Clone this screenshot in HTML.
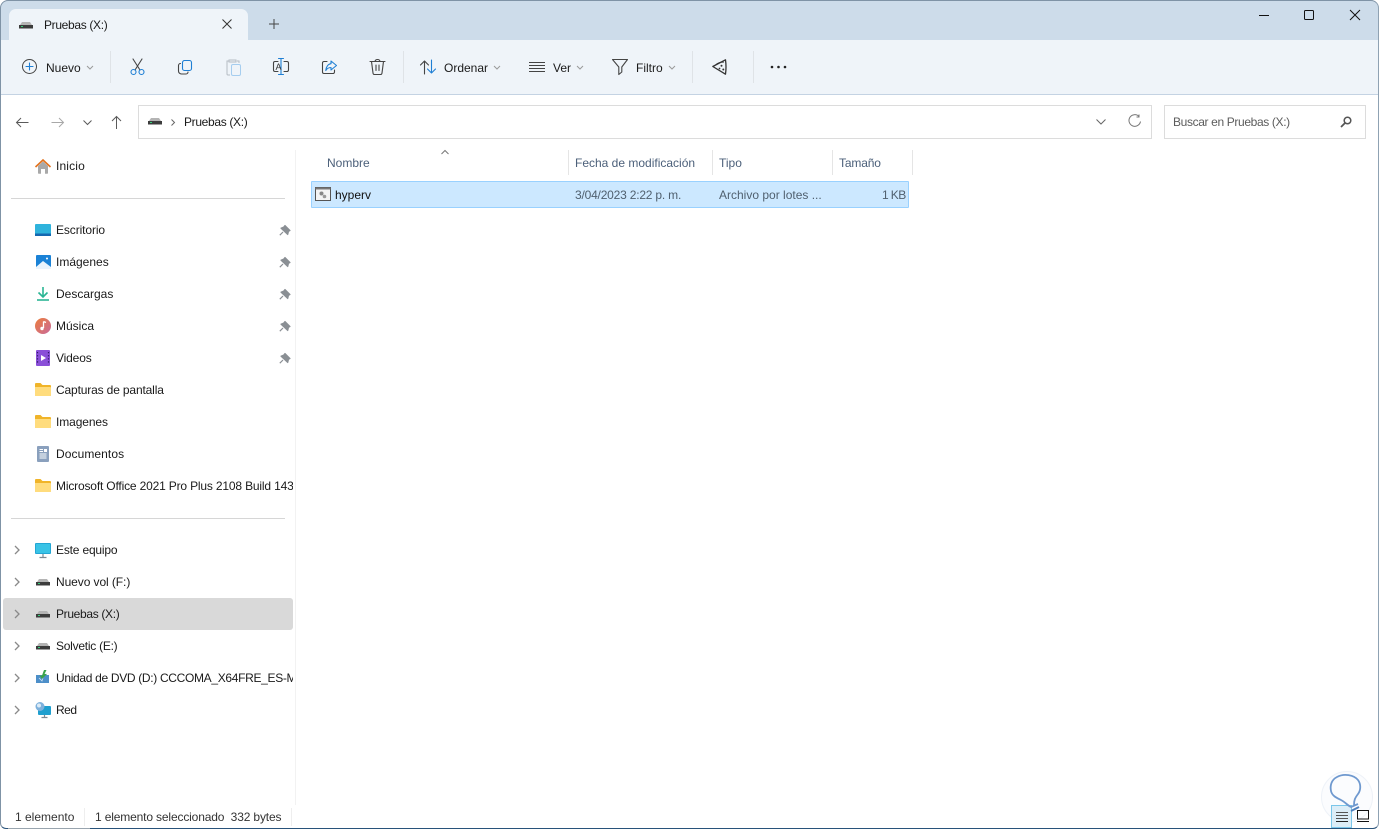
<!DOCTYPE html>
<html lang="es"><head><meta charset="utf-8"><title>Pruebas (X:)</title>
<style>
html,body{margin:0;padding:0;width:1379px;height:829px;overflow:hidden;background:#fff}
body{font-family:"Liberation Sans",sans-serif;font-size:12px;color:#1a1a1a;position:relative}
.a{position:absolute}
.t{position:absolute;white-space:nowrap;line-height:16px;height:16px}
svg{position:absolute;overflow:visible}
.n{left:56px}
.g{color:#5c5c5c}
.s{fill:none;stroke:#444;stroke-width:1.1;stroke-linecap:round;stroke-linejoin:round}
.b{fill:none;stroke:#1f7fd4;stroke-width:1.1;stroke-linecap:round;stroke-linejoin:round}
</style></head><body>
<svg width="0" height="0" style="position:absolute"><defs>
<g id="drive"><rect x="0" y="3" width="14" height="3.500" fill="#3c3c3c"/><path d="M1 3 L3 0 H11 L13 3Z" fill="#b4b4b4"/><rect x="2" y="4" width="2" height="1" fill="#36d17a"/></g>
<g id="folder"><path d="M0 2 a1 1 0 0 1 1-1 h4.500 l2 2 H15 a1 1 0 0 1 1 1 V13 a1 1 0 0 1-1 1 H1 a1 1 0 0 1-1-1Z" fill="#f0b429"/><path d="M0 5 H15 a1 1 0 0 1 1 1 V13 a1 1 0 0 1-1 1 H1 a1 1 0 0 1-1-1Z" fill="#ffdc7d"/></g>
<g id="pin"><path d="M6 .5 L11 5.500 L9.500 6.300 L8.700 9.500 L2 3.200 L4.800 2Z M4 7 L.8 10.200" fill="#8a8f94" stroke="#8a8f94" stroke-width="1.200" stroke-linejoin="round"/></g>
<path id="chev" d="M0 0 L4 4 L0 8" fill="none" stroke="#8a8a8a" stroke-width="1.300"/>
<path id="dd" d="M0 0 L3 3 L6 0" fill="none" stroke="#9a9a9a" stroke-width="1"/>
</defs></svg>

<!-- title bar -->
<div class="a" style="left:0;top:0;width:1379px;height:40px;background:#cddcea;border-radius:8px 8px 0 0"></div>
<div class="a" style="left:9px;top:9px;width:239px;height:32px;background:#eff4f9;border-radius:7px 7px 0 0"></div>
<svg style="left:19px;top:22px" width="14" height="8"><use href="#drive"/></svg>
<div class="t" style="left:44px;top:17px;letter-spacing:-.33px">Pruebas (X:)</div>
<svg style="left:222px;top:19px" width="10" height="10"><path d="M.5.5 L9.500 9.500 M9.500.5 L.5 9.500" fill="none" stroke="#333" stroke-width="1"/></svg>
<svg style="left:269px;top:19px" width="10" height="10"><path d="M5 0 V10 M0 5 H10" fill="none" stroke="#444" stroke-width="1"/></svg>
<!-- window controls -->
<svg style="left:1259px;top:15px" width="10" height="2"><path d="M0 .5 H10" stroke="#111" stroke-width="1"/></svg>
<svg style="left:1304px;top:10px" width="10" height="10"><rect x=".5" y=".5" width="9" height="9" rx="1" fill="none" stroke="#111"/></svg>
<svg style="left:1350px;top:10px" width="10" height="10"><path d="M0 0 L10 10 M10 0 L0 10" stroke="#111" stroke-width="1"/></svg>

<!-- toolbar -->
<div class="a" style="left:0;top:40px;width:1379px;height:54px;background:#eff4f9"></div>
<div class="a" style="left:0;top:94px;width:1379px;height:1px;background:#c4d3e3"></div>
<svg style="left:22px;top:59px" width="15" height="15"><circle cx="7.500" cy="7.500" r="7" fill="none" stroke="#444"/><path d="M7.500 4 V11 M4 7.500 H11" class="b"/></svg>
<div class="t" style="left:46px;top:60px">Nuevo</div>
<svg style="left:87px;top:66px" width="6" height="4"><use href="#dd"/></svg>
<div class="a" style="left:110px;top:51px;width:1px;height:32px;background:#dfe3e7"></div>
<svg style="left:130px;top:59px" width="15" height="16"><path d="M3 0 L10 11 M12 0 L5 11" class="s"/><circle cx="3.500" cy="13" r="2.500" class="b"/><circle cx="11.500" cy="13" r="2.500" class="b"/></svg>
<svg style="left:178px;top:60px" width="15" height="15"><rect x="4.500" y=".5" width="9" height="10" rx="2" class="b"/><path d="M2.500 3.500 a2 2 0 0 0-2 2 V11 a3 3 0 0 0 3 3 H8 a2 2 0 0 0 2-2" class="s"/></svg>
<svg style="left:226px;top:59px" width="15" height="17"><path d="M3 2 H1 V15 a1 1 0 0 0 1 1 H4 M11 2 H13 V4 M3 3 V1 H10 V3Z" fill="none" stroke="#b5bcc4"/><rect x="5.500" y="5.500" width="9" height="11" rx="1.500" fill="none" stroke="#a5cdef"/></svg>
<svg style="left:273px;top:58px" width="16" height="18"><path d="M5 3.500 H2 a1.500 1.500 0 0 0-1.500 1.500 V12 a1.500 1.500 0 0 0 1.500 1.500 H5 M11 3.500 H14 a1.500 1.500 0 0 1 1.500 1.500 V12 a1.500 1.500 0 0 1-1.500 1.500 H11" class="s"/><path d="M5.500 .5 H10.500 M5.500 16.500 H10.500 M8 .5 V16.500" class="b"/><text x="2.500" y="12" font-family="Liberation Sans" font-size="9" fill="#333">A</text></svg>
<svg style="left:322px;top:60px" width="15" height="15"><path d="M5 1.500 H2 a1.500 1.500 0 0 0-1.500 1.500 V12 a1.500 1.500 0 0 0 1.500 1.500 H11 a1.500 1.500 0 0 0 1.500-1.500 V10" class="s"/><path d="M9 1 L14.500 5.500 L9 10 V7.500 C6.500 7.500 5 8.500 3.800 10.500 C4 7 6 4 9 3.700Z" class="b"/></svg>
<svg style="left:370px;top:59px" width="15" height="16"><path d="M0 2.500 H15 M5 2.500 a2.500 2 0 0 1 5 0 M1.500 2.500 L3 14 a1.500 1.500 0 0 0 1.500 1.500 H10.500 a1.500 1.500 0 0 0 1.500-1.500 L13.500 2.500 M6 6 V11.500 M9 6 V11.500" class="s"/></svg>
<div class="a" style="left:403px;top:51px;width:1px;height:32px;background:#dfe3e7"></div>
<svg style="left:420px;top:60px" width="16" height="14"><path d="M4.500 14 V1 M.5 5 L4.500 1 L8.500 5" class="s"/><path d="M11.500 0 V13 M7.500 9 L11.500 13 L15.500 9" class="b"/></svg>
<div class="t" style="left:444px;top:60px">Ordenar</div>
<svg style="left:494px;top:66px" width="6" height="4"><use href="#dd"/></svg>
<svg style="left:529px;top:62px" width="16" height="10"><path d="M0 .5 H16 M0 3.500 H16 M0 6.500 H16 M0 9.500 H16" stroke="#444" stroke-width="1"/></svg>
<div class="t" style="left:553px;top:60px">Ver</div>
<svg style="left:577px;top:66px" width="6" height="4"><use href="#dd"/></svg>
<svg style="left:612px;top:59px" width="16" height="16"><path d="M.5 .5 H15.500 L9.800 8 V13 L6.800 15.500 V8Z" class="s"/></svg>
<div class="t" style="left:636px;top:60px">Filtro</div>
<svg style="left:669px;top:66px" width="6" height="4"><use href="#dd"/></svg>
<div class="a" style="left:692px;top:51px;width:1px;height:32px;background:#dfe3e7"></div>
<svg style="left:712px;top:59px" width="15" height="16"><path d="M.8 7.500 L13.500 .8 Q14.500 8 13.500 15.200Z" fill="none" stroke="#333" stroke-width="1.300" stroke-linejoin="round"/><path d="M3.500 6 C6 3.800 9 3 11.800 3.200" fill="none" stroke="#333" stroke-width="1"/><circle cx="9.500" cy="6.800" r="1" fill="#333"/><circle cx="11.300" cy="10.500" r="1" fill="#333"/><circle cx="7.500" cy="9.500" r=".9" fill="#333"/></svg>
<div class="a" style="left:753px;top:51px;width:1px;height:32px;background:#dfe3e7"></div>
<svg style="left:770px;top:65px" width="17" height="4"><circle cx="2" cy="2" r="1.300" fill="#222"/><circle cx="8.500" cy="2" r="1.300" fill="#222"/><circle cx="15" cy="2" r="1.300" fill="#222"/></svg>

<!-- nav -->
<svg style="left:16px;top:117px" width="13" height="11"><path d="M12.500 5.500 H.5 M5 1 L.5 5.500 L5 10" fill="none" stroke="#5a5a5a" stroke-width="1"/></svg>
<svg style="left:51px;top:117px" width="13" height="11"><path d="M.5 5.500 H12.500 M8 1 L12.500 5.500 L8 10" fill="none" stroke="#a8a8a8" stroke-width="1"/></svg>
<svg style="left:83px;top:120px" width="9" height="5"><path d="M.5 .5 L4.500 4.500 L8.500 .5" fill="none" stroke="#5a5a5a" stroke-width="1"/></svg>
<svg style="left:111px;top:116px" width="11" height="13"><path d="M5.500 13 V.5 M1 5 L5.500 .5 L10 5" fill="none" stroke="#5a5a5a" stroke-width="1"/></svg>
<div class="a" style="left:138px;top:105px;width:1012px;height:32px;border:1px solid #dcdcdc;box-sizing:content-box"></div>
<svg style="left:148px;top:118px" width="14" height="8"><use href="#drive"/></svg>
<svg style="left:171px;top:119px" width="4" height="7"><path d="M.5 .5 L3.500 3.500 L.5 6.500" fill="none" stroke="#666" stroke-width="1"/></svg>
<div class="t" style="left:184px;top:114px;letter-spacing:-.33px">Pruebas (X:)</div>
<svg style="left:1096px;top:119px" width="10" height="6"><path d="M.5 .5 L5 5 L9.500 .5" fill="none" stroke="#666" stroke-width="1"/></svg>
<svg style="left:1128px;top:114px" width="13" height="14"><path d="M11 2.500 A5.800 5.800 0 1 0 12.500 7.500 M11 .5 V3 H8.500" fill="none" stroke="#777" stroke-width="1"/></svg>
<div class="a" style="left:1164px;top:105px;width:200px;height:32px;border:1px solid #dcdcdc"></div>
<div class="t g" style="left:1173px;top:114px;letter-spacing:-.36px">Buscar en Pruebas (X:)</div>
<svg style="left:1340px;top:116px" width="12" height="12"><circle cx="7.500" cy="4.500" r="3.300" fill="none" stroke="#555" stroke-width="1.500"/><path d="M5 7 L1 11" stroke="#555" stroke-width="1.800"/></svg>

<!-- sidebar -->
<div class="a" style="left:295px;top:150px;width:1px;height:655px;background:#f2f2f2"></div>
<div class="a" style="left:3px;top:598px;width:290px;height:32px;background:#d9d9d9;border-radius:3px"></div>
<div class="a" style="left:11px;top:198px;width:274px;height:1px;background:#d6d6d6"></div>
<div class="a" style="left:11px;top:518px;width:274px;height:1px;background:#d6d6d6"></div>

<svg style="left:35px;top:159px" width="16" height="15"><path d="M3 7 V14 a.800 .800 0 0 0 .800 .800 H6 V10 H10 V14.800 H12.200 a.800 .800 0 0 0 .800-.800 V7 L8 2.500Z" fill="#a9a9a9"/><path d="M.5 8 L8 1 L15.500 8" fill="none" stroke="#e3721c" stroke-width="1.600"/></svg>
<div class="t n" style="top:158px;letter-spacing:.15px">Inicio</div>

<svg style="left:35px;top:224px" width="16" height="12"><rect width="16" height="12" rx="1" fill="#2fb3dc"/><rect y="9.500" width="16" height="2.500" fill="#1568b0"/></svg>
<div class="t n" style="top:222px;letter-spacing:-.1px">Escritorio</div>
<svg style="left:36px;top:255px" width="15" height="14"><rect width="15" height="14" rx="1" fill="#1b82d6"/><path d="M0 12 L7 6 L15 12 V14 H0Z" fill="#eaf4fd"/><circle cx="11" cy="3.500" r="1" fill="#fff"/></svg>
<div class="t n" style="top:254px">Imágenes</div>
<svg style="left:37px;top:287px" width="12" height="14"><path d="M6 0 V9 M1.500 5.500 L6 10 L10.500 5.500" fill="none" stroke="#2bb594" stroke-width="1.600"/><path d="M0 13 H12" stroke="#2bb594" stroke-width="1.600"/></svg>
<div class="t n" style="top:286px">Descargas</div>
<svg style="left:35px;top:318px" width="16" height="16"><defs><linearGradient id="m" x1="0" y1="0" x2="1" y2="1"><stop offset="0" stop-color="#ec7d3a"/><stop offset="1" stop-color="#c96a9c"/></linearGradient></defs><circle cx="8" cy="8" r="8" fill="url(#m)"/><path d="M8.500 3.500 V10 M8.500 3.500 L11 4.500" stroke="#fff" stroke-width="1.300" fill="none"/><circle cx="7" cy="10.500" r="1.700" fill="#fff"/></svg>
<div class="t n" style="top:318px">Música</div>
<svg style="left:36px;top:350px" width="14" height="16"><rect width="14" height="16" rx="1" fill="#8a4fd8"/><path d="M5 5 L10 8 L5 11Z" fill="#fff"/><path d="M1.500 2 V14 M12.500 2 V14" stroke="#2f1a66" stroke-width="1.200" stroke-dasharray="1.300 1.800"/></svg>
<div class="t n" style="top:350px;letter-spacing:-.15px">Videos</div>
<svg style="left:279px;top:225px" width="11" height="11"><use href="#pin"/></svg>
<svg style="left:279px;top:257px" width="11" height="11"><use href="#pin"/></svg>
<svg style="left:279px;top:289px" width="11" height="11"><use href="#pin"/></svg>
<svg style="left:279px;top:321px" width="11" height="11"><use href="#pin"/></svg>
<svg style="left:279px;top:353px" width="11" height="11"><use href="#pin"/></svg>

<svg style="left:35px;top:382px" width="16" height="15"><use href="#folder"/></svg>
<div class="t n" style="top:382px;letter-spacing:-.15px">Capturas de pantalla</div>
<svg style="left:35px;top:414px" width="16" height="15"><use href="#folder"/></svg>
<div class="t n" style="top:414px;letter-spacing:-.1px">Imagenes</div>
<svg style="left:37px;top:446px" width="12" height="16"><rect width="12" height="16" rx="1" fill="#8aa0bd"/><path d="M2.500 3.500 H6 M2.500 5.500 H6 M2.500 8 H9.500 M2.500 10 H9.500 M2.500 12 H9.500" stroke="#fff" stroke-width="1"/><rect x="7" y="3" width="3" height="3" fill="#fff"/></svg>
<div class="t n" style="top:446px;letter-spacing:.08px">Documentos</div>
<svg style="left:35px;top:478px" width="16" height="15"><use href="#folder"/></svg>
<div class="a" style="left:56px;top:478px;width:237px;height:16px;overflow:hidden;white-space:nowrap;line-height:16px;letter-spacing:-.17px">Microsoft Office 2021 Pro Plus 2108 Build 143</div>

<svg style="left:15px;top:546px" width="6" height="9"><use href="#chev"/></svg>
<svg style="left:15px;top:578px" width="6" height="9"><use href="#chev"/></svg>
<svg style="left:15px;top:610px" width="6" height="9"><use href="#chev"/></svg>
<svg style="left:15px;top:642px" width="6" height="9"><use href="#chev"/></svg>
<svg style="left:15px;top:674px" width="6" height="9"><use href="#chev"/></svg>
<svg style="left:15px;top:706px" width="6" height="9"><use href="#chev"/></svg>

<svg style="left:35px;top:543px" width="16" height="15"><rect width="16" height="11" rx="1" fill="#23a6d4"/><rect x="1" y="1" width="14" height="9" fill="#39c3e6"/><path d="M8 11 V14 M4.500 14.500 H11.500" stroke="#7c8a94" stroke-width="1.200"/></svg>
<div class="t n" style="top:542px;letter-spacing:-.18px">Este equipo</div>
<svg style="left:36px;top:579px" width="14" height="8"><use href="#drive"/></svg>
<div class="t n" style="top:574px;letter-spacing:-.08px">Nuevo vol (F:)</div>
<svg style="left:36px;top:611px" width="14" height="8"><use href="#drive"/></svg>
<div class="t n" style="top:606px;letter-spacing:-.33px">Pruebas (X:)</div>
<svg style="left:36px;top:643px" width="14" height="8"><use href="#drive"/></svg>
<div class="t n" style="top:638px;letter-spacing:-.25px">Solvetic (E:)</div>
<svg style="left:36px;top:670px" width="13" height="14"><rect y="5" width="13" height="8" fill="#4d8fc9"/><path d="M3 8 L6 11 L8 4 L11 4" fill="none" stroke="#cfe3f3" stroke-width=".8"/><path d="M8 0 L10.500 0 L8.500 4 L11 4 L6 9 L3.500 5.500 L6 5.500Z" fill="#39a34a"/></svg>
<div class="a" style="left:56px;top:670px;width:237px;height:16px;overflow:hidden;white-space:nowrap;line-height:16px;letter-spacing:-.32px">Unidad de DVD (D:) CCCOMA_X64FRE_ES-MX</div>
<svg style="left:35px;top:702px" width="16" height="16"><rect x="3" y="4" width="13" height="9" rx="1" fill="#1f9fcf"/><path d="M9.500 13 V15.500 M6.500 15.500 H12.500" stroke="#7c8a94" stroke-width="1.200"/><circle cx="5" cy="4.500" r="4.500" fill="#7eb1dc"/><circle cx="4" cy="3.500" r="2" fill="#dcebf7"/></svg>
<div class="t n" style="top:702px;letter-spacing:-.5px">Red</div>

<!-- list -->
<svg style="left:441px;top:150px" width="8" height="5"><path d="M.5 4 L4 .5 L7.500 4" fill="none" stroke="#777" stroke-width="1"/></svg>
<div class="t" style="left:327px;top:155px;color:#4c607a">Nombre</div>
<div class="t" style="left:575px;top:155px;color:#4c607a">Fecha de modificación</div>
<div class="t" style="left:719px;top:155px;color:#4c607a">Tipo</div>
<div class="t" style="left:839px;top:155px;color:#4c607a;letter-spacing:-.15px">Tamaño</div>
<div class="a" style="left:568px;top:150px;width:1px;height:25px;background:#e5e5e5"></div>
<div class="a" style="left:712px;top:150px;width:1px;height:25px;background:#e5e5e5"></div>
<div class="a" style="left:832px;top:150px;width:1px;height:25px;background:#e5e5e5"></div>
<div class="a" style="left:912px;top:150px;width:1px;height:25px;background:#e5e5e5"></div>

<div class="a" style="left:311px;top:181px;width:596px;height:25px;background:#cce8ff;border:1px solid #99d1ff;border-radius:1px"></div>
<svg style="left:315px;top:187px" width="16" height="14"><rect x=".5" y=".5" width="15" height="13" fill="#f4f4f4" stroke="#555"/><rect x=".5" y=".5" width="15" height="2" fill="#777"/><circle cx="6.500" cy="6.500" r="2" fill="#888"/><circle cx="9.500" cy="9.500" r="1.800" fill="#999"/></svg>
<div class="t" style="left:335px;top:187px;color:#111">hyperv</div>
<div class="t" style="left:575px;top:187px;color:#50606f;letter-spacing:-.2px">3/04/2023 2:22 p. m.</div>
<div class="t" style="left:719px;top:187px;color:#50606f">Archivo por lotes ...</div>
<div class="t" style="left:882px;top:187px;color:#50606f;letter-spacing:-.6px">1 KB</div>

<!-- status -->
<div class="t" style="left:15px;top:809px;color:#333">1 elemento</div>
<div class="a" style="left:84px;top:808px;width:1px;height:18px;background:#eee"></div>
<div class="t" style="left:95px;top:809px;color:#333;letter-spacing:-.15px">1 elemento seleccionado&nbsp; 332 bytes</div>
<div class="a" style="left:291px;top:808px;width:1px;height:18px;background:#eee"></div>

<!-- window frame -->
<div class="a" style="left:0;top:0;width:1379px;height:829px;box-sizing:border-box;border:1px solid #7f93a6;border-bottom-color:#28527a;border-right-color:#8fa2b3;border-radius:8px 8px 6px 6px"></div>
<div class="a" style="left:8px;top:828px;width:82px;height:1px;background:#98a4ae"></div>

<!-- watermark -->
<div class="a" style="left:1321px;top:771px;width:50px;height:50px;border-radius:50%;background:#fbfcfe;border:1px solid #eef2f8"></div>
<div class="a" style="left:1331px;top:805px;width:19px;height:21px;background:#dcedf7;border:1px solid #7ac6ea"></div>
<svg style="left:1320px;top:770px" width="54" height="54"><path d="M34 35 C34 30 35 28 38 24 C41 20 41 14 38 10 C34 5 24 3 17 7 C11 10 10 16 11 21 C12 26 17 28 21 30 C25 32 27 35 31 37 L38 34" fill="none" stroke="#6f99cf" stroke-width="1.800"/><path d="M31 41 L39 37" stroke="#4f80bd" stroke-width="2"/></svg>
<svg style="left:1336px;top:812px" width="12" height="10"><path d="M0 .5 H12 M0 3.500 H12 M0 6.500 H12" stroke="#555"/><path d="M0 9.500 H12" stroke="#222"/></svg>
<svg style="left:1357px;top:810px" width="12" height="12"><rect x=".5" y=".5" width="11" height="8.500" fill="none" stroke="#111"/><path d="M0 11.500 H12" stroke="#111"/></svg>
</body></html>
